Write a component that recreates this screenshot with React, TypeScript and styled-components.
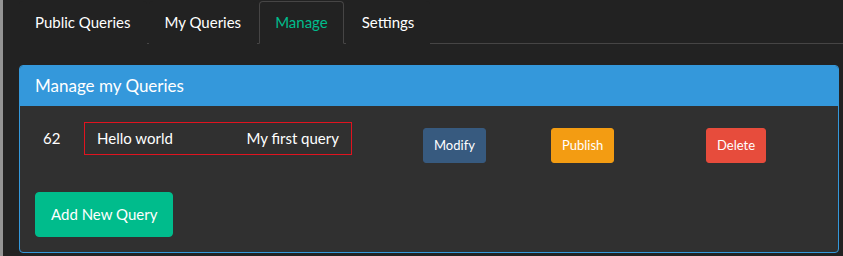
import React from 'react';
import styled, { createGlobalStyle } from 'styled-components';

const GlobalStyle = createGlobalStyle`
  html, body {
    margin: 0;
    background: #222222;
    font-family: Lato, "Open Sans", sans-serif;
    color: #ffffff;
  }
`;

const Page = styled.div`
  border-left: 3px solid #949494;
  padding: 1px 0 0 16px;
  min-height: 255px;
`;

const Tabs = styled.ul`
  display: flex;
  list-style: none;
  margin: 0 0 21px;
  padding: 0;
  border-bottom: 1px solid #464545;
`;

const Tab = styled.li<{ active?: boolean }>`
  margin: 0 2px -1px 0;
  padding: 10px 15px;
  font-size: 15px;
  line-height: 21px;
  border: 1px solid ${p => (p.active ? '#464545' : 'transparent')};
  border-bottom-color: ${p => (p.active ? '#222222' : 'transparent')};
  border-radius: 4px 4px 0 0;
  color: ${p => (p.active ? '#00bc8c' : '#ffffff')};
  background: #222222;
`;

const Panel = styled.section`
  margin-right: 4px;
  border: 1px solid #3498db;
  border-radius: 4px;
  background: #303030;
  overflow: hidden;
`;

const PanelHeading = styled.h3`
  margin: 0;
  padding: 10px 15px 10px 15px;
  background: #3498db;
  font-size: 17px;
  font-weight: normal;
  line-height: 19px;
  border-bottom: 1px solid #3498db;
`;

const PanelBody = styled.div`
  padding: 16px 15px 15px;
`;

const QueryRow = styled.div`
  display: flex;
  align-items: flex-start;
`;

const QueryId = styled.div`
  width: 41px;
  padding: 6px 0 0 8px;
  font-size: 15px;
  line-height: 21px;
`;

const QueryBox = styled.div`
  width: 268px;
  box-sizing: border-box;
  display: flex;
  justify-content: space-between;
  padding: 5px 12px;
  border: 1px solid #e0131f;
  font-size: 15px;
  line-height: 21px;
`;

const Actions = styled.div`
  display: flex;
  margin: 6px 0 0 71px;
`;

const ActionSlot = styled.div<{ width?: number }>`
  width: ${p => (p.width ? `${p.width}px` : 'auto')};
`;

const Button = styled.button<{ color: string; size?: 'sm' | 'md' }>`
  font-family: Lato, "Open Sans", sans-serif;
  color: #ffffff;
  background: ${p => p.color};
  border: 1px solid ${p => p.color};
  border-radius: ${p => (p.size === 'sm' ? '3px' : '4px')};
  font-size: ${p => (p.size === 'sm' ? '13px' : '15px')};
  line-height: 21px;
  padding: ${p => (p.size === 'sm' ? '6px 10px' : '11px 15px')};
  cursor: pointer;
`;

const Footer = styled.div`
  margin-top: 29px;
`;

const tabs = ['Public Queries', 'My Queries', 'Manage', 'Settings'];

const queries = [{ id: 62, name: 'Hello world', description: 'My first query' }];

const App = () => {
  return <>
    <GlobalStyle />
    <Page>
      <Tabs>
        {tabs.map(t => <Tab key={t} active={t === 'Manage'}>{t}</Tab>)}
      </Tabs>
      <Panel>
        <PanelHeading>Manage my Queries</PanelHeading>
        <PanelBody>
          {queries.map(q => (
            <QueryRow key={q.id}>
              <QueryId>{q.id}</QueryId>
              <QueryBox>
                <span>{q.name}</span>
                <span>{q.description}</span>
              </QueryBox>
              <Actions>
                <ActionSlot width={128}>
                  <Button size='sm' color='#375a7f'>Modify</Button>
                </ActionSlot>
                <ActionSlot width={155}>
                  <Button size='sm' color='#f39c12'>Publish</Button>
                </ActionSlot>
                <ActionSlot>
                  <Button size='sm' color='#e74c3c'>Delete</Button>
                </ActionSlot>
              </Actions>
            </QueryRow>
          ))}
          <Footer>
            <Button color='#00bc8c'>Add New Query</Button>
          </Footer>
        </PanelBody>
      </Panel>
    </Page>
  </>;
};

export default App;
